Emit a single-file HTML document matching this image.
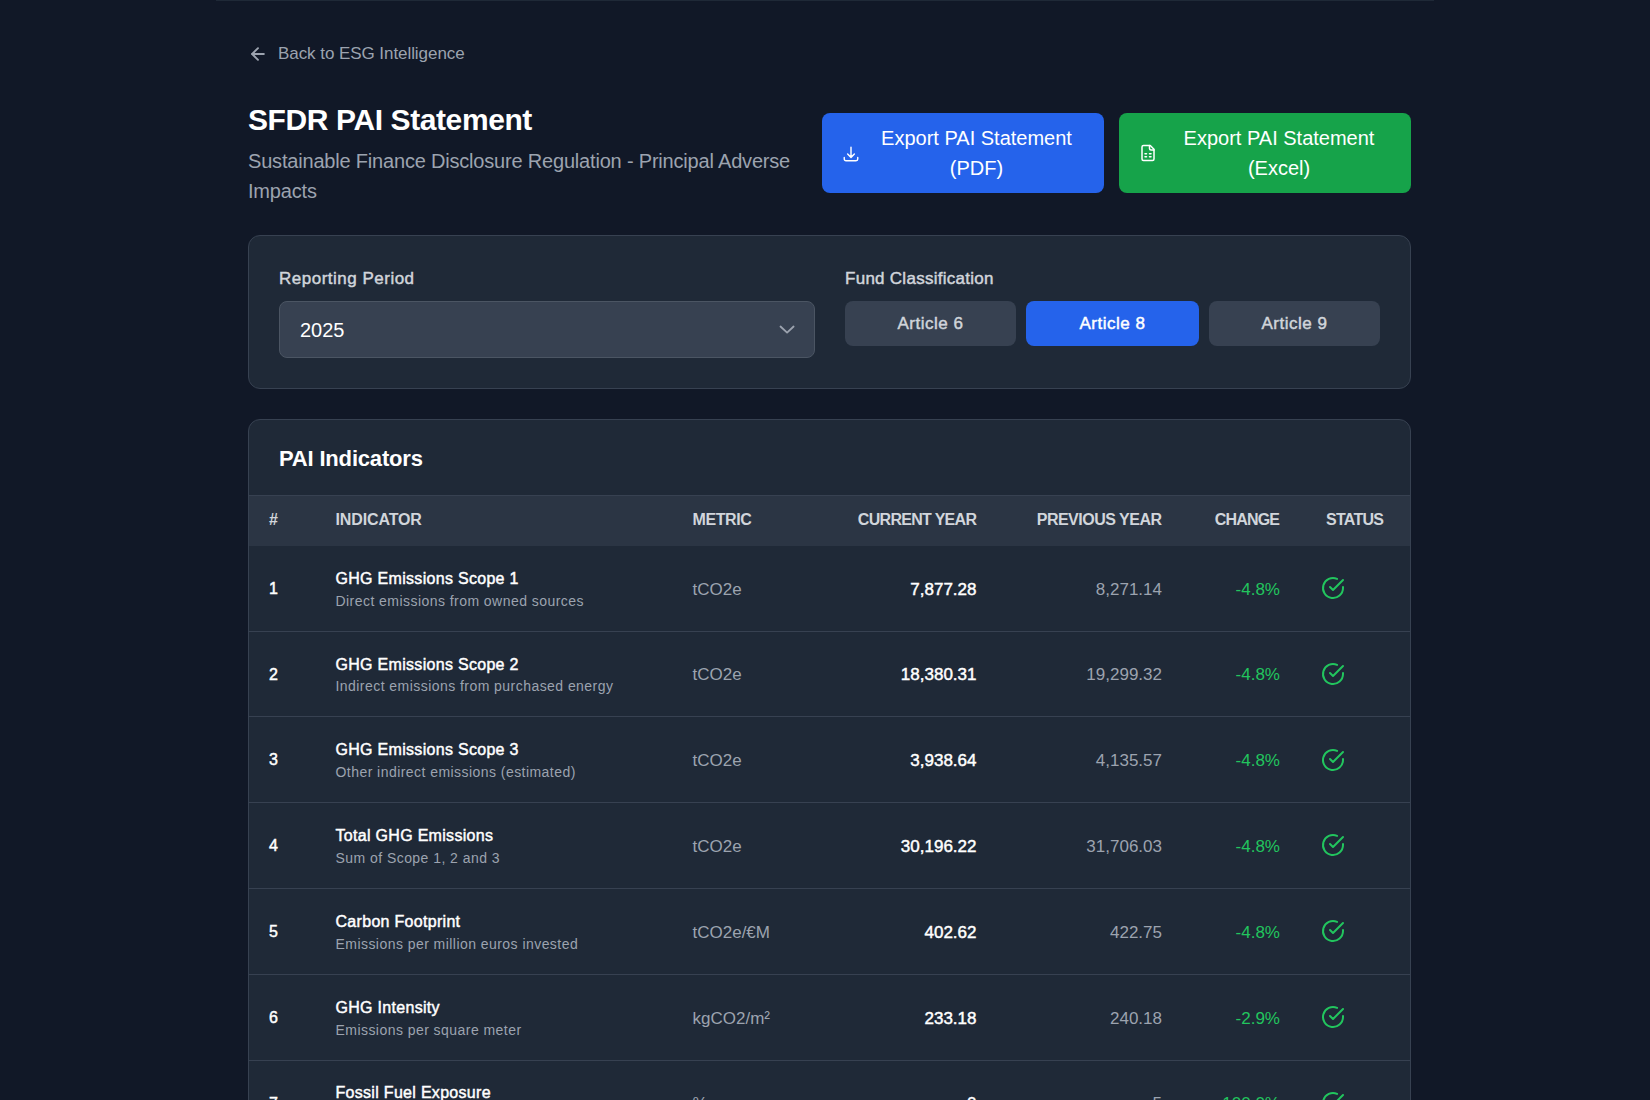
<!DOCTYPE html>
<html>
<head>
<meta charset="utf-8">
<style>
html,body{margin:0;padding:0;}
body{width:1650px;height:1100px;overflow:hidden;background:#111827;font-family:"Liberation Sans",sans-serif;position:relative;}
.a{position:absolute;}
.t{position:absolute;white-space:nowrap;line-height:1;}
.b{font-weight:700;}
.m{font-weight:400;-webkit-text-stroke:0.45px currentColor;}
.topbar{left:216px;top:-20px;width:1218px;height:21px;background:#1f2937;border-radius:0;}
.card{background:#1f2937;border:1px solid #374151;border-radius:12px;box-sizing:border-box;}
.btn{border-radius:8px;}
.c{text-align:center;}
.r{text-align:right;}
svg{position:absolute;overflow:visible;}
</style>
</head>
<body>
<div class="a topbar"></div>

<!-- back link -->
<svg style="left:247.5px;top:43.5px" width="20" height="20" viewBox="0 0 24 24" fill="none" stroke="#9ca3af" stroke-width="2.3" stroke-linecap="round" stroke-linejoin="round"><path d="m12 19-7-7 7-7"/><path d="M19 12H5"/></svg>
<div class="t" style="left:278px;top:45px;font-size:17px;color:#9ca3af;letter-spacing:-0.06px">Back to ESG Intelligence</div>

<!-- title -->
<div class="t b" style="left:248px;top:105.1px;font-size:30px;color:#ffffff;letter-spacing:-0.4px">SFDR PAI Statement</div>
<div class="t" style="left:248px;top:150.9px;font-size:20px;color:#9ca3af;letter-spacing:-0.19px">Sustainable Finance Disclosure Regulation - Principal Adverse</div>
<div class="t" style="left:248px;top:181px;font-size:20px;color:#9ca3af;letter-spacing:-0.19px">Impacts</div>

<!-- export buttons -->
<div class="a btn" style="left:822px;top:113px;width:282px;height:80px;background:#2563eb"></div>
<svg style="left:841.5px;top:144.5px" width="18" height="18" viewBox="0 0 24 24" fill="none" stroke="#ffffff" stroke-width="1.9" stroke-linecap="round" stroke-linejoin="round"><path d="M3 16.5v2.25A2.25 2.25 0 0 0 5.25 21h13.5A2.25 2.25 0 0 0 21 18.75V16.5M16.5 12 12 16.5m0 0L7.5 12m4.5 4.5V3"/></svg>
<div class="t c" style="left:876.5px;width:200px;top:128.4px;font-size:20px;color:#fff">Export PAI Statement</div>
<div class="t c" style="left:876.5px;width:200px;top:158.1px;font-size:20px;color:#fff">(PDF)</div>

<div class="a btn" style="left:1119px;top:113px;width:292px;height:80px;background:#16a34a"></div>
<svg style="left:1138.7px;top:143.8px" width="18" height="18" viewBox="0 0 24 24" fill="none" stroke="#ffffff" stroke-width="2" stroke-linecap="round" stroke-linejoin="round"><path d="M15 2H6a2 2 0 0 0-2 2v16a2 2 0 0 0 2 2h12a2 2 0 0 0 2-2V7Z"/><path d="M14 2v4a2 2 0 0 0 2 2h4"/><path d="M8 13h2"/><path d="M14 13h2"/><path d="M8 17h2"/><path d="M14 17h2"/></svg>
<div class="t c" style="left:1179px;width:200px;top:128.4px;font-size:20px;color:#fff">Export PAI Statement</div>
<div class="t c" style="left:1179px;width:200px;top:158.1px;font-size:20px;color:#fff">(Excel)</div>

<!-- filter card -->
<div class="a card" style="left:248px;top:235px;width:1163px;height:154px"></div>
<div class="t m" style="left:279px;top:270.2px;font-size:17px;color:#d1d5db;letter-spacing:0.5px">Reporting Period</div>
<div class="a" style="left:279px;top:301px;width:536px;height:57px;background:#374151;border:1px solid #4b5563;border-radius:8px;box-sizing:border-box"></div>
<div class="t" style="left:300px;top:319.9px;font-size:20px;color:#ffffff">2025</div>
<svg style="left:0;top:0" width="1" height="1"><polyline points="780.5,326.5 787.1,332.6 793.6,326.5" fill="none" stroke="#9ca3af" stroke-width="1.8" stroke-linecap="round" stroke-linejoin="round"/></svg>

<div class="t m" style="left:845px;top:270.2px;font-size:17px;color:#d1d5db;letter-spacing:0.27px">Fund Classification</div>
<div class="a btn" style="left:845px;top:301px;width:171px;height:44.5px;background:#374151"></div>
<div class="t m c" style="letter-spacing:0.5px;left:845px;width:171px;top:314.8px;font-size:17px;color:#d1d5db">Article 6</div>
<div class="a btn" style="left:1026px;top:301px;width:173px;height:44.5px;background:#2563eb"></div>
<div class="t m c" style="letter-spacing:0.5px;left:1026px;width:173px;top:314.8px;font-size:17px;color:#ffffff">Article 8</div>
<div class="a btn" style="left:1209px;top:301px;width:171px;height:44.5px;background:#374151"></div>
<div class="t m c" style="letter-spacing:0.5px;left:1209px;width:171px;top:314.8px;font-size:17px;color:#d1d5db">Article 9</div>

<!-- PAI card -->
<div class="a card" style="left:248px;top:419px;width:1163px;height:760px;overflow:hidden">
  <div class="a" style="left:0;top:75px;width:1161px;height:50.8px;background:#2b3544;border-top:1px solid #374151;box-sizing:border-box"></div>
</div>
<div class="t b" style="left:279px;top:447.7px;font-size:22px;color:#ffffff;letter-spacing:-0.18px">PAI Indicators</div>

<!-- header -->
<div class="t b" style="left:269px;top:512px;font-size:16px;color:#d1d5db">#</div>
<div class="t b" style="left:335.5px;top:512px;font-size:16px;color:#d1d5db;letter-spacing:-0.13px">INDICATOR</div>
<div class="t b" style="left:692.5px;top:512px;font-size:16px;color:#d1d5db;letter-spacing:-0.42px">METRIC</div>
<div class="t b r" style="left:776.3px;width:200px;top:512px;font-size:16px;color:#d1d5db;letter-spacing:-0.7px">CURRENT YEAR</div>
<div class="t b r" style="left:961.5px;width:200px;top:512px;font-size:16px;color:#d1d5db;letter-spacing:-0.5px">PREVIOUS YEAR</div>
<div class="t b r" style="left:1079.2px;width:200px;top:512px;font-size:16px;color:#d1d5db;letter-spacing:-0.82px">CHANGE</div>
<div class="t b" style="left:1326px;top:512px;font-size:16px;color:#d1d5db;letter-spacing:-0.75px">STATUS</div>

<!--ROWS-->
<div class="a" style="left:249px;top:630.60px;width:1161px;height:1px;background:#374151"></div>
<div class="t m" style="left:269px;top:580.90px;font-size:16px;color:#ffffff">1</div>
<div class="t m" style="left:335.5px;top:570.80px;font-size:16px;color:#ffffff;letter-spacing:0.3px">GHG Emissions Scope 1</div>
<div class="t" style="left:335.5px;top:593.60px;font-size:14px;color:#9ca3af;letter-spacing:0.45px">Direct emissions from owned sources</div>
<div class="t" style="left:692.5px;top:580.70px;font-size:17px;color:#9ca3af">tCO2e</div>
<div class="t m r" style="left:776.5px;width:200px;top:580.70px;font-size:17px;color:#ffffff">7,877.28</div>
<div class="t r" style="left:962px;width:200px;top:580.70px;font-size:17px;color:#9ca3af">8,271.14</div>
<div class="t r" style="left:1080px;width:200px;top:580.70px;font-size:17px;color:#22c55e">-4.8%</div>
<svg style="left:1320.9px;top:576.00px" width="24" height="24" viewBox="0 0 24 24" fill="none" stroke="#22c55e" stroke-width="2" stroke-linecap="round" stroke-linejoin="round"><path d="M22 11.08V12a10 10 0 1 1-5.93-9.14"/><polyline points="22 4 12 14.01 9 11.01"/></svg>
<div class="a" style="left:249px;top:716.38px;width:1161px;height:1px;background:#374151"></div>
<div class="t m" style="left:269px;top:666.68px;font-size:16px;color:#ffffff">2</div>
<div class="t m" style="left:335.5px;top:656.58px;font-size:16px;color:#ffffff;letter-spacing:0.3px">GHG Emissions Scope 2</div>
<div class="t" style="left:335.5px;top:679.38px;font-size:14px;color:#9ca3af;letter-spacing:0.45px">Indirect emissions from purchased energy</div>
<div class="t" style="left:692.5px;top:666.48px;font-size:17px;color:#9ca3af">tCO2e</div>
<div class="t m r" style="left:776.5px;width:200px;top:666.48px;font-size:17px;color:#ffffff">18,380.31</div>
<div class="t r" style="left:962px;width:200px;top:666.48px;font-size:17px;color:#9ca3af">19,299.32</div>
<div class="t r" style="left:1080px;width:200px;top:666.48px;font-size:17px;color:#22c55e">-4.8%</div>
<svg style="left:1320.9px;top:661.78px" width="24" height="24" viewBox="0 0 24 24" fill="none" stroke="#22c55e" stroke-width="2" stroke-linecap="round" stroke-linejoin="round"><path d="M22 11.08V12a10 10 0 1 1-5.93-9.14"/><polyline points="22 4 12 14.01 9 11.01"/></svg>
<div class="a" style="left:249px;top:802.16px;width:1161px;height:1px;background:#374151"></div>
<div class="t m" style="left:269px;top:752.46px;font-size:16px;color:#ffffff">3</div>
<div class="t m" style="left:335.5px;top:742.36px;font-size:16px;color:#ffffff;letter-spacing:0.3px">GHG Emissions Scope 3</div>
<div class="t" style="left:335.5px;top:765.16px;font-size:14px;color:#9ca3af;letter-spacing:0.45px">Other indirect emissions (estimated)</div>
<div class="t" style="left:692.5px;top:752.26px;font-size:17px;color:#9ca3af">tCO2e</div>
<div class="t m r" style="left:776.5px;width:200px;top:752.26px;font-size:17px;color:#ffffff">3,938.64</div>
<div class="t r" style="left:962px;width:200px;top:752.26px;font-size:17px;color:#9ca3af">4,135.57</div>
<div class="t r" style="left:1080px;width:200px;top:752.26px;font-size:17px;color:#22c55e">-4.8%</div>
<svg style="left:1320.9px;top:747.56px" width="24" height="24" viewBox="0 0 24 24" fill="none" stroke="#22c55e" stroke-width="2" stroke-linecap="round" stroke-linejoin="round"><path d="M22 11.08V12a10 10 0 1 1-5.93-9.14"/><polyline points="22 4 12 14.01 9 11.01"/></svg>
<div class="a" style="left:249px;top:887.94px;width:1161px;height:1px;background:#374151"></div>
<div class="t m" style="left:269px;top:838.24px;font-size:16px;color:#ffffff">4</div>
<div class="t m" style="left:335.5px;top:828.14px;font-size:16px;color:#ffffff;letter-spacing:0.3px">Total GHG Emissions</div>
<div class="t" style="left:335.5px;top:850.94px;font-size:14px;color:#9ca3af;letter-spacing:0.45px">Sum of Scope 1, 2 and 3</div>
<div class="t" style="left:692.5px;top:838.04px;font-size:17px;color:#9ca3af">tCO2e</div>
<div class="t m r" style="left:776.5px;width:200px;top:838.04px;font-size:17px;color:#ffffff">30,196.22</div>
<div class="t r" style="left:962px;width:200px;top:838.04px;font-size:17px;color:#9ca3af">31,706.03</div>
<div class="t r" style="left:1080px;width:200px;top:838.04px;font-size:17px;color:#22c55e">-4.8%</div>
<svg style="left:1320.9px;top:833.34px" width="24" height="24" viewBox="0 0 24 24" fill="none" stroke="#22c55e" stroke-width="2" stroke-linecap="round" stroke-linejoin="round"><path d="M22 11.08V12a10 10 0 1 1-5.93-9.14"/><polyline points="22 4 12 14.01 9 11.01"/></svg>
<div class="a" style="left:249px;top:973.72px;width:1161px;height:1px;background:#374151"></div>
<div class="t m" style="left:269px;top:924.02px;font-size:16px;color:#ffffff">5</div>
<div class="t m" style="left:335.5px;top:913.92px;font-size:16px;color:#ffffff;letter-spacing:0.3px">Carbon Footprint</div>
<div class="t" style="left:335.5px;top:936.72px;font-size:14px;color:#9ca3af;letter-spacing:0.45px">Emissions per million euros invested</div>
<div class="t" style="left:692.5px;top:923.82px;font-size:17px;color:#9ca3af">tCO2e/€M</div>
<div class="t m r" style="left:776.5px;width:200px;top:923.82px;font-size:17px;color:#ffffff">402.62</div>
<div class="t r" style="left:962px;width:200px;top:923.82px;font-size:17px;color:#9ca3af">422.75</div>
<div class="t r" style="left:1080px;width:200px;top:923.82px;font-size:17px;color:#22c55e">-4.8%</div>
<svg style="left:1320.9px;top:919.12px" width="24" height="24" viewBox="0 0 24 24" fill="none" stroke="#22c55e" stroke-width="2" stroke-linecap="round" stroke-linejoin="round"><path d="M22 11.08V12a10 10 0 1 1-5.93-9.14"/><polyline points="22 4 12 14.01 9 11.01"/></svg>
<div class="a" style="left:249px;top:1059.50px;width:1161px;height:1px;background:#374151"></div>
<div class="t m" style="left:269px;top:1009.80px;font-size:16px;color:#ffffff">6</div>
<div class="t m" style="left:335.5px;top:999.70px;font-size:16px;color:#ffffff;letter-spacing:0.3px">GHG Intensity</div>
<div class="t" style="left:335.5px;top:1022.50px;font-size:14px;color:#9ca3af;letter-spacing:0.45px">Emissions per square meter</div>
<div class="t" style="left:692.5px;top:1009.60px;font-size:17px;color:#9ca3af">kgCO2/m²</div>
<div class="t m r" style="left:776.5px;width:200px;top:1009.60px;font-size:17px;color:#ffffff">233.18</div>
<div class="t r" style="left:962px;width:200px;top:1009.60px;font-size:17px;color:#9ca3af">240.18</div>
<div class="t r" style="left:1080px;width:200px;top:1009.60px;font-size:17px;color:#22c55e">-2.9%</div>
<svg style="left:1320.9px;top:1004.90px" width="24" height="24" viewBox="0 0 24 24" fill="none" stroke="#22c55e" stroke-width="2" stroke-linecap="round" stroke-linejoin="round"><path d="M22 11.08V12a10 10 0 1 1-5.93-9.14"/><polyline points="22 4 12 14.01 9 11.01"/></svg>
<div class="a" style="left:249px;top:1145.28px;width:1161px;height:1px;background:#374151"></div>
<div class="t m" style="left:269px;top:1095.58px;font-size:16px;color:#ffffff">7</div>
<div class="t m" style="left:335.5px;top:1085.48px;font-size:16px;color:#ffffff;letter-spacing:0.3px">Fossil Fuel Exposure</div>
<div class="t" style="left:335.5px;top:1108.28px;font-size:14px;color:#9ca3af;letter-spacing:0.45px">Share of investments in fossil fuel sector</div>
<div class="t" style="left:692.5px;top:1095.38px;font-size:17px;color:#9ca3af">%</div>
<div class="t m r" style="left:776.5px;width:200px;top:1095.38px;font-size:17px;color:#ffffff">0</div>
<div class="t r" style="left:962px;width:200px;top:1095.38px;font-size:17px;color:#9ca3af">5</div>
<div class="t r" style="left:1080px;width:200px;top:1095.38px;font-size:17px;color:#22c55e">-100.0%</div>
<svg style="left:1320.9px;top:1090.68px" width="24" height="24" viewBox="0 0 24 24" fill="none" stroke="#22c55e" stroke-width="2" stroke-linecap="round" stroke-linejoin="round"><path d="M22 11.08V12a10 10 0 1 1-5.93-9.14"/><polyline points="22 4 12 14.01 9 11.01"/></svg>
<!--/ROWS-->
</body>
</html>
